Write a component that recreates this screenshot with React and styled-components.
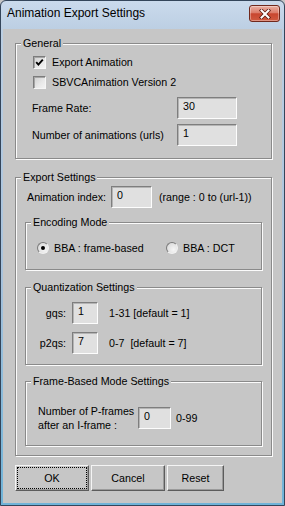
import React from 'react';
import styled, { createGlobalStyle } from 'styled-components';

const Global = createGlobalStyle`
  html, body { margin: 0; padding: 0; background: #c6c6c6; }
  body { font-family: "Liberation Sans", Arial, sans-serif; }
  *, *::before, *::after { box-sizing: border-box; }
`;

const UI_FONT = `"Liberation Sans", Arial, sans-serif`;

const Window = styled.div`
  width: 285px;
  height: 506px;
  display: flex;
  flex-direction: column;
  border: 1px solid #34455a;
  border-radius: 6px 6px 0 0;
  padding: 0 2px 2px;
  background: linear-gradient(180deg, #cadaec 0px, #bccfe3 28px, #a7c2dc 55%, #6fb3d8 100%);
  overflow: hidden;
`;

const TitleBar = styled.div`
  height: 28px;
  flex: none;
  display: flex;
  align-items: flex-start;
  padding: 4px 2px 0 4px;
`;

const Title = styled.div`
  font-family: ${UI_FONT};
  font-size: 12px;
  line-height: 17px;
  color: #000;
  flex: 1;
`;

const CloseButton = styled.div`
  width: 31px;
  height: 17px;
  border: 1px solid #70281c;
  border-radius: 3px;
  background: linear-gradient(180deg, #eab0a3 0%, #dc7c69 45%, #c8462f 52%, #d05a40 100%);
  box-shadow: inset 0 0 0 1px rgba(255, 255, 255, 0.35);
  display: flex;
  align-items: center;
  justify-content: center;
`;

const Client = styled.div`
  flex: 1;
  background: #c6c6c6;
  display: flex;
  flex-direction: column;
  padding: 8px 10px 0 12px;
  font-family: ${UI_FONT};
  font-size: 10.7px;
  color: #000;
`;

const Group = styled.fieldset`
  margin: ${(p) => p.$mt || 0}px 0 0 0;
  padding: 0;
  min-width: 0;
  border: 1px solid #8a8a8a;
  box-shadow: inset 1px 1px 0 #fbfbfb, 1px 1px 0 #fbfbfb;
`;

const Legend = styled.legend`
  margin-left: 5px;
  padding: 0 2px;
  line-height: 13px;
  font-size: 10.7px;
  background: #c6c6c6;
`;

const Body = styled.div`
  display: flex;
  flex-direction: column;
  padding: ${(p) => p.$pad};
  gap: ${(p) => p.$gap || 0}px;
`;

const CheckRow = styled.label`
  height: 20px;
  display: flex;
  align-items: center;
  gap: 6px;
  padding-left: 1px;
`;

const CheckBox = styled.span`
  width: 13px;
  height: 13px;
  flex: none;
  border: 1px solid;
  border-color: #7c7c7c #f6f6f6 #f6f6f6 #7c7c7c;
  background: linear-gradient(135deg, #cfcfcf 0%, #e9e9e9 60%, #f3f3f3 100%);
  box-shadow: inset 1px 1px 0 #a6a6a6;
  display: flex;
  align-items: center;
  justify-content: center;
`;

const FieldRow = styled.div`
  height: ${(p) => p.$h || 22}px;
  display: flex;
  align-items: center;
  margin-left: ${(p) => p.$ml || 0}px;
`;

const FieldLabel = styled.span`
  width: ${(p) => p.$w}px;
  flex: none;
  text-align: ${(p) => p.$align || 'left'};
  line-height: ${(p) => p.$lh || 13}px;
  white-space: nowrap;
`;

const Field = styled.input.attrs({ readOnly: true, type: 'text' })`
  width: ${(p) => p.$w}px;
  height: 22px;
  flex: none;
  margin: 0 ${(p) => p.$mr || 0}px 0 ${(p) => p.$ml || 0}px;
  border: 1px solid;
  border-color: #7e7e7e #fdfdfd #fdfdfd #7e7e7e;
  box-shadow: inset 1px 1px 0 #b4b4b4;
  background: #e0e0e0;
  padding: 1px 5px 5px;
  font-family: ${UI_FONT};
  font-size: 10.7px;
  color: #000;
  outline: none;
`;

const Hint = styled.span`
  white-space: pre;
`;

const RadioRow = styled.div`
  height: 20px;
  display: flex;
  align-items: center;
`;

const RadioOption = styled.label`
  width: ${(p) => (p.$w ? `${p.$w}px` : 'auto')};
  display: flex;
  align-items: center;
  gap: 5px;
`;

const RadioCircle = styled.span`
  width: 12px;
  height: 12px;
  flex: none;
  border-radius: 50%;
  border: 1px solid;
  border-color: #7c7c7c #f2f2f2 #f2f2f2 #7c7c7c;
  background: radial-gradient(circle at 65% 65%, #f6f6f6 0%, #e2e2e2 60%, #cfcfcf 100%);
  display: flex;
  align-items: center;
  justify-content: center;
`;

const RadioDot = styled.span`
  width: 4px;
  height: 4px;
  border-radius: 50%;
  background: #000;
`;

const ButtonBar = styled.div`
  display: flex;
  gap: 2px;
  margin-top: 9px;
`;

const Button = styled.button`
  position: relative;
  width: ${(p) => p.$w}px;
  height: 26px;
  padding: 0;
  border: 1px solid;
  border-color: #f4f4f4 #5c5c5c #5c5c5c #f4f4f4;
  box-shadow: inset -1px -1px 0 #9a9a9a;
  background: #c6c6c6;
  font-family: ${UI_FONT};
  font-size: 10.7px;
  color: #000;
  cursor: default;

  ${(p) =>
    p.$focused &&
    `
    &::after {
      content: '';
      position: absolute;
      inset: 1px 1px 1px 1px;
      border: 1px dotted #000;
    }
  `}
`;

function CheckMark() {
  return (
    <svg width="9" height="9" viewBox="0 0 9 9">
      <polyline points="1.2,4.2 3.4,6.6 7.8,1.6" fill="none" stroke="#000" strokeWidth="1.9" />
    </svg>
  );
}

function CloseGlyph() {
  return (
    <svg width="12" height="10" viewBox="0 0 12 10">
      <path d="M2.5 1.5 L9.5 8.5 M9.5 1.5 L2.5 8.5" stroke="#5a1a10" strokeWidth="3.6" strokeLinecap="square" />
      <path d="M2.5 1.5 L9.5 8.5 M9.5 1.5 L2.5 8.5" stroke="#ffffff" strokeWidth="2" strokeLinecap="square" />
    </svg>
  );
}

export default function App() {
  return (
    <>
      <Global />
      <Window>
        <TitleBar>
          <Title>Animation Export Settings</Title>
          <CloseButton>
            <CloseGlyph />
          </CloseButton>
        </TitleBar>
        <Client>
          <Group>
            <Legend>General</Legend>
            <Body $pad="2px 0 12px 16px">
              <CheckRow>
                <CheckBox>
                  <CheckMark />
                </CheckBox>
                Export Animation
              </CheckRow>
              <CheckRow>
                <CheckBox />
                SBVCAnimation Version 2
              </CheckRow>
              <FieldRow style={{ marginTop: 5 }}>
                <FieldLabel $w={145}>Frame Rate:</FieldLabel>
                <Field $w={60} defaultValue="30" />
              </FieldRow>
              <FieldRow style={{ marginTop: 5 }}>
                <FieldLabel $w={145}>Number of animations (urls)</FieldLabel>
                <Field $w={60} defaultValue="1" />
              </FieldRow>
            </Body>
          </Group>

          <Group $mt={12}>
            <Legend>Export Settings</Legend>
            <Body $pad="2px 9px 9px 9px">
              <FieldRow $ml={2}>
                <FieldLabel $w={84}>Animation index:</FieldLabel>
                <Field $w={41} $mr={7} defaultValue="0" />
                <Hint>(range : 0 to (url-1))</Hint>
              </FieldRow>

              <Group $mt={8}>
                <Legend>Encoding Mode</Legend>
                <Body $pad="9px 0 11px 11px">
                  <RadioRow>
                    <RadioOption $w={129}>
                      <RadioCircle>
                        <RadioDot />
                      </RadioCircle>
                      BBA : frame-based
                    </RadioOption>
                    <RadioOption>
                      <RadioCircle />
                      BBA : DCT
                    </RadioOption>
                  </RadioRow>
                </Body>
              </Group>

              <Group $mt={11}>
                <Legend>Quantization Settings</Legend>
                <Body $pad="8px 0 10px 0" $gap={8}>
                  <FieldRow>
                    <FieldLabel $w={40} $align="right">gqs:</FieldLabel>
                    <Field $w={26} $ml={6} $mr={11} defaultValue="1" />
                    <Hint>1-31 [default = 1]</Hint>
                  </FieldRow>
                  <FieldRow>
                    <FieldLabel $w={40} $align="right">p2qs:</FieldLabel>
                    <Field $w={26} $ml={6} $mr={11} defaultValue="7" />
                    <Hint>0-7  [default = 7]</Hint>
                  </FieldRow>
                </Body>
              </Group>

              <Group $mt={10}>
                <Legend>Frame-Based Mode Settings</Legend>
                <Body $pad="16px 0 13px 12px">
                  <FieldRow $h={28}>
                    <FieldLabel $w={100} $lh={14}>
                      Number of P-frames
                      <br />
                      after an I-frame :
                    </FieldLabel>
                    <Field $w={33} $mr={5} defaultValue="0" />
                    <Hint>0-99</Hint>
                  </FieldRow>
                </Body>
              </Group>
            </Body>
          </Group>

          <ButtonBar>
            <Button $w={74} $focused>OK</Button>
            <Button $w={74}>Cancel</Button>
            <Button $w={57}>Reset</Button>
          </ButtonBar>
        </Client>
      </Window>
    </>
  );
}
